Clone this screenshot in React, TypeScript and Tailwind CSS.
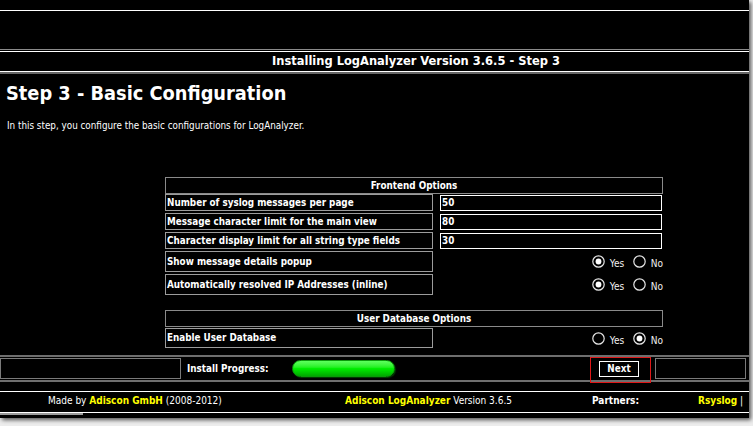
const F = "font-['DejaVu_Sans_Condensed','DejaVu_Sans',sans-serif]";

function Radio({ checked }: { checked: boolean }) {
  return (
    <svg width="13" height="13" viewBox="0 0 13 13" className="shrink-0">
      <circle cx="6.5" cy="6.5" r="5.7" fill="#000" stroke="#e6e6e6" strokeWidth="1.2" />
      {checked && <circle cx="6.5" cy="6.5" r="2.9" fill="#fff" />}
    </svg>
  );
}

function RadioPair({ yes }: { yes: boolean }) {
  return (
    <div className="ml-auto flex items-center text-[10px] text-[#f2f2f2]">
      <Radio checked={yes} />
      <span className="ml-[5px] mt-[4px] w-[17px]">Yes</span>
      <span className="ml-[6px]"><Radio checked={!yes} /></span>
      <span className="ml-[5px] mt-[4px]">No</span>
    </div>
  );
}

function Label({ text, h }: { text: string; h: string }) {
  return (
    <div className={`w-[268px] ${h} shrink-0 border border-[#9c9c9c] flex items-center pl-[1px] pt-[1px] text-[9.8px] font-bold text-white`}>
      {text}
    </div>
  );
}

function InputRow({ label, value }: { label: string; value: string }) {
  return (
    <div className="flex items-center h-[17px]">
      <Label text={label} h="h-[17px]" />
      <div className="ml-[7px] w-[222px] h-[16px] border border-white flex items-center pl-[1px] pt-[1px] text-[9.8px] font-bold text-white">
        {value}
      </div>
    </div>
  );
}

function RadioRow({ label, yes, h }: { label: string; yes: boolean; h: string }) {
  return (
    <div className={`flex items-center ${h}`}>
      <Label text={label} h={h} />
      <RadioPair yes={yes} />
    </div>
  );
}

function SectionHeader({ text }: { text: string }) {
  return (
    <div className="h-[17px] border border-[#8a8a8a] flex items-center justify-center pt-[1px] text-[9.8px] font-bold text-white">
      {text}
    </div>
  );
}

export default function App() {
  return (
    <div className={`w-[753px] h-[426px] bg-[#ededed] overflow-hidden ${F}`}>
      <div className="w-[749px] h-[418px] bg-black flex flex-col shadow-[2px_2px_4px_rgba(0,0,0,0.65)] text-white">
        {/* top decorative lines */}
        <div className="h-[10px] shrink-0" />
        <div className="h-px bg-white shrink-0" />
        <div className="h-[38px] shrink-0" />
        <div className="h-px bg-[#8a8a8a] shrink-0" />
        <div className="h-px shrink-0" />
        <div className="h-px bg-white shrink-0" />
        <div className="h-[19px] shrink-0 flex items-center pl-[272px] text-[12.75px] font-bold leading-none">
          Installing LogAnalyzer Version 3.6.5 - Step 3
        </div>
        <div className="h-px bg-white shrink-0" />
        <div className="h-[2px] bg-[#666] shrink-0" />

        {/* heading */}
        <h1 className="mt-[8px] pl-[6px] text-[19.8px] leading-[24px] font-bold">Step 3 - Basic Configuration</h1>
        <p className="mt-[13px] pl-[7px] text-[9.8px] leading-[14px]">
          In this step, you configure the basic configurations for LogAnalyzer.
        </p>

        {/* options table */}
        <div className="mt-[44px] ml-[165px] w-[498px] flex flex-col">
          <SectionHeader text="Frontend Options" />
          <div className="flex flex-col gap-[2px]">
            <InputRow label="Number of syslog messages per page" value="50" />
            <InputRow label="Message character limit for the main view" value="80" />
            <InputRow label="Character display limit for all string type fields" value="30" />
            <RadioRow label="Show message details popup" yes={true} h="h-[21px]" />
            <RadioRow label="Automatically resolved IP Addresses (inline)" yes={true} h="h-[21px]" />
          </div>
          <div className="mt-[15px]">
            <SectionHeader text="User Database Options" />
          </div>
          <div className="mt-[1px]">
            <RadioRow label="Enable User Database" yes={false} h="h-[20px]" />
          </div>
        </div>

        {/* install progress bar */}
        <div className="relative mt-[7px] shrink-0">
          <div className="h-[2px] bg-[#6e6e6e]" />
          <div className="h-[23px] flex items-center">
            <div className="w-[181px] h-[21px] border border-[#7a7a7a] shrink-0" />
            <div className="ml-[6px] w-[105px] pt-[1px] text-[9.8px] font-bold">Install Progress:</div>
            <div className="w-[103px] h-[17px] rounded-full border border-[#0a9a0a] bg-gradient-to-b from-[#5cff5c] via-[#00ee00] to-[#00a800] shadow-[1px_1px_1px_rgba(0,80,0,0.8)]" />
            <div className="flex-1" />
            <div className="w-[40px] h-[16px] border border-white flex items-center justify-center pt-[1px] text-[9.8px] font-bold">
              Next
            </div>
            <div className="ml-[16px] mr-[3px] w-[91px] h-[21px] border border-[#7a7a7a] shrink-0" />
          </div>
          <div className="h-[2px] bg-[#6e6e6e]" />
          <div className="absolute left-[590px] top-[2px] w-[61px] h-[26px] border border-[#e01818]" />
        </div>

        {/* footer */}
        <div className="mt-[9px] h-px bg-white shrink-0" />
        <div className="h-[20px] shrink-0 flex items-center pb-[3px] text-[10px] whitespace-nowrap">
          <div className="w-[345px] pl-[48px]">
            Made by <span className="font-bold text-[#ffff00]">Adiscon GmbH</span> (2008-2012)
          </div>
          <div className="w-[247px]">
            <span className="font-bold text-[#ffff00]">Adiscon LogAnalyzer</span> Version 3.6.5
          </div>
          <div className="w-[106px] font-bold">Partners:</div>
          <div>
            <span className="font-bold text-[#ffff00]">Rsyslog</span> |
          </div>
        </div>
        <div className="h-px bg-white shrink-0" />
        <div className="h-[2px] w-[83px] bg-[#9a9a9a] shrink-0" />
      </div>
    </div>
  );
}
